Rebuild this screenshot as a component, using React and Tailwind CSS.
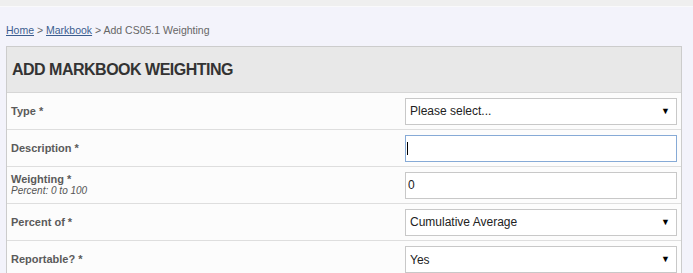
import React from "react";

function Select({ value }) {
  return (
    <div className="w-[272px] h-[27px] border border-[#c8c8c8] bg-white flex items-center justify-between pl-[4px] pr-[6px] text-[12px] text-[#222]">
      <span>{value}</span>
      <span className="text-[9px] text-black leading-none">▼</span>
    </div>
  );
}

function Row({ label, sub, children, last }) {
  return (
    <div className={`h-[37px] flex items-center justify-between pl-[4px] pr-[4px] ${last ? "" : "border-b border-[#dedede]"}`}>
      <div className="flex flex-col leading-none">
        <span className="text-[11px] font-bold text-[#5a5a5a]">{label}</span>
        {sub && <span className="text-[10px] italic text-[#555] mt-[1px]">{sub}</span>}
      </div>
      {children}
    </div>
  );
}

export default function App() {
  return (
    <div className="w-[693px] h-[273px] overflow-hidden bg-[#f3f3fb]" style={{ fontFamily: '"Liberation Sans", Arial, sans-serif' }}>
      <div className="h-[7px] bg-[#efefef] border-b border-[#f9f9fb]" />
      <div className="pl-[6px] pt-[16px] h-[39px] text-[10.5px] text-[#666]">
        <a className="text-[#3b5d8f] underline">Home</a>
        <span> &gt; </span>
        <a className="text-[#3b5d8f] underline">Markbook</a>
        <span> &gt; Add CS05.1 Weighting</span>
      </div>
      <div className="ml-[6px] w-[676px] border border-[#cccccc] bg-[#fcfcfc]">
        <div className="h-[46px] bg-[#e8e8e8] border-b border-[#d6d6d6] flex items-center pl-[5px]">
          <span className="text-[16px] font-bold text-[#333] tracking-[-0.5px]">ADD MARKBOOK WEIGHTING</span>
        </div>
        <Row label="Type *">
          <Select value="Please select..." />
        </Row>
        <Row label="Description *">
          <div className="w-[272px] h-[27px] border border-[#86aad6] bg-white flex items-center pl-[1px]">
            <span className="w-[1px] h-[13px] bg-black" />
          </div>
        </Row>
        <Row label="Weighting *" sub="Percent: 0 to 100">
          <div className="w-[272px] h-[27px] border border-[#c8c8c8] bg-white flex items-center pl-[2px] text-[12px] text-[#222]">
            0
          </div>
        </Row>
        <Row label="Percent of *">
          <Select value="Cumulative Average" />
        </Row>
        <Row label="Reportable? *" last>
          <Select value="Yes" />
        </Row>
      </div>
    </div>
  );
}
